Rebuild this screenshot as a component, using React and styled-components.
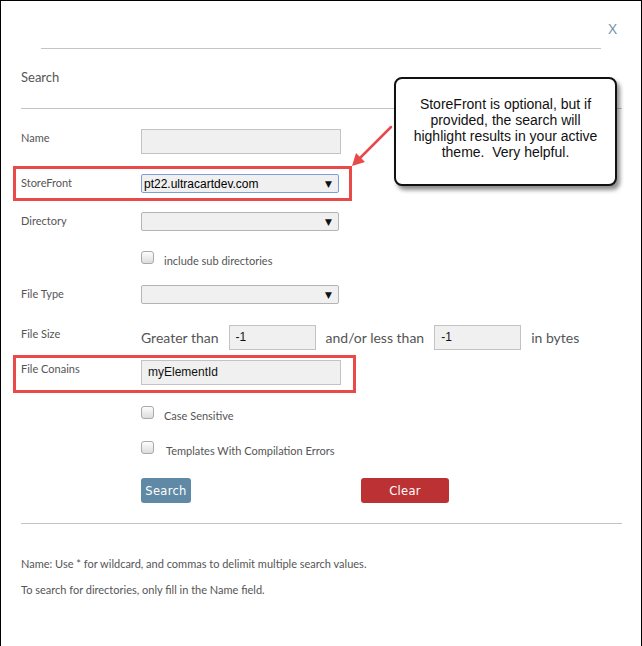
import React from "react";
import styled, { createGlobalStyle } from "styled-components";

const GlobalStyle = createGlobalStyle`
  html, body {
    margin: 0;
    padding: 0;
    background: #fff;
  }
  * {
    box-sizing: border-box;
  }
`;

const Frame = styled.div`
  position: relative;
  width: 642px;
  height: 646px;
  border: 1px solid #000;
  border-bottom: none;
  font-family: Lato, "Open Sans", sans-serif;
  color: #555;
  overflow: hidden;
`;

const Header = styled.div`
  height: 47px;
  padding: 18px 24px 0 0;
  display: flex;
  justify-content: flex-end;
`;

const Close = styled.span`
  font-family: "Open Sans", sans-serif;
  font-size: 15px;
  line-height: 18px;
  color: #6e8ea8;
`;

const Rule = styled.div`
  height: 1px;
  background: #c4c4c4;
  margin: ${props => props.inset ? "0 40px" : "0 19px 0 20px"};
  margin-top: ${props => props.top || 0}px;
`;

const Title = styled.div`
  font-size: 13px;
  line-height: 16px;
  padding-left: 20px;
  margin: 20px 0 23px;
`;

const Form = styled.div`
  padding-left: 20px;
  display: flex;
  flex-direction: column;
  align-items: flex-start;
`;

const Row = styled.div`
  display: flex;
  align-items: flex-start;
  margin-top: ${props => props.top}px;
`;

const Highlight = styled.div`
  display: flex;
  align-items: flex-start;
  margin-top: ${props => props.top}px;
  margin-left: -8px;
  border: 3px solid #e84a4a;
  padding: ${props => props.pad};
`;

const Label = styled.div`
  width: 120px;
  font-size: 11px;
  line-height: 17px;
  color: #555;
`;

const TextInput = styled.div`
  width: ${props => props.w || 200}px;
  height: 25px;
  background: #f0f0f0;
  border: 1px solid #c3c3c3;
  padding-left: 6px;
  font-family: "Liberation Sans", Arial, sans-serif;
  font-size: 12px;
  line-height: 23px;
  color: #111;
`;

const Select = styled.div`
  width: 198px;
  height: 19px;
  background: #f0f0f0;
  border: 1px solid ${props => props.focused ? "#7d9fd8" : "#b4b4b4"};
  border-radius: 2px;
  display: flex;
  align-items: center;
  justify-content: space-between;
  padding: 0 6px 0 2px;
  font-family: "Liberation Sans", Arial, sans-serif;
  font-size: 12px;
  color: #000;
`;

const Caret = styled.span`
  font-family: "DejaVu Sans", sans-serif;
  font-size: 9px;
  color: #111;
`;

const Check = styled.span`
  width: 13px;
  height: 13px;
  border: 1px solid #a9a9a9;
  border-radius: 3px;
  background: linear-gradient(#fdfdfd, #dcdcdc);
  flex-shrink: 0;
`;

const CheckRow = styled.div`
  display: flex;
  align-items: flex-start;
  height: 13px;
  margin-top: ${props => props.top}px;
  margin-left: 120px;
  gap: ${props => props.gap || 10}px;
  font-size: 11px;
  line-height: 13px;
  color: #555;
  white-space: nowrap;
`;

const CheckText = styled.span`
  padding-top: 3px;
`;

const Inline = styled.div`
  display: flex;
  align-items: center;
  gap: 10px;
  font-size: 14px;
  color: #555;
`;

const Buttons = styled.div`
  display: flex;
  margin-top: 24px;
  margin-left: 120px;
  gap: 170px;
`;

const Button = styled.div`
  width: ${props => props.w}px;
  height: 25px;
  border-radius: 3px;
  background: ${props => props.danger ? "#bc3234" : "#5f89a4"};
  color: #fff;
  font-family: "DejaVu Sans", Verdana, sans-serif;
  font-size: 11.5px;
  letter-spacing: 0.3px;
  display: flex;
  align-items: center;
  justify-content: center;
`;

const Note = styled.p`
  margin: ${props => props.top}px 0 0 20px;
  font-size: 11px;
  line-height: 16px;
  color: #555;
`;

const Callout = styled.div`
  position: absolute;
  left: 393px;
  top: 76px;
  width: 223px;
  height: 109px;
  border: 2px solid #111;
  border-radius: 8px;
  background: #fff;
  box-shadow: 3px 4px 4px rgba(0, 0, 0, 0.45);
  display: flex;
  align-items: center;
  justify-content: center;
  padding: 0 6px 8px;
  text-align: center;
  font-family: "Liberation Sans", Arial, sans-serif;
  font-size: 14px;
  line-height: 16px;
  color: #111;
  white-space: pre-wrap;
`;

const Pointer = styled.svg`
  position: absolute;
  left: 340px;
  top: 110px;
`;

const App = () => (
  <>
    <GlobalStyle />
    <Frame>
      <Header><Close>X</Close></Header>
      <Rule inset />
      <Title>Search</Title>
      <Rule />

      <Form>
        <Row top={20}>
          <Label>Name</Label>
          <TextInput />
        </Row>

        <Highlight top={12} pad="5px 10px 5px 5px">
          <Label>StoreFront</Label>
          <Select focused>pt22.ultracartdev.com<Caret>▼</Caret></Select>
        </Highlight>

        <Row top={11}>
          <Label>Directory</Label>
          <Select><span /><Caret>▼</Caret></Select>
        </Row>

        <CheckRow top={20}><Check /><CheckText>include sub directories</CheckText></CheckRow>

        <Row top={21}>
          <Label>File Type</Label>
          <Select><span /><Caret>▼</Caret></Select>
        </Row>

        <Row top={21}>
          <Label>File Size</Label>
          <Inline>
            Greater than
            <TextInput w={87}>-1</TextInput>
            and/or less than
            <TextInput w={87}>-1</TextInput>
            in bytes
          </Inline>
        </Row>

        <Highlight top={5} pad="2px 12px 5px 5px">
          <Label>File Conains</Label>
          <TextInput>myElementId</TextInput>
        </Highlight>

        <CheckRow top={13}><Check /><CheckText>Case Sensitive</CheckText></CheckRow>
        <CheckRow top={22} gap={12}><Check /><CheckText>Templates With Compilation Errors</CheckText></CheckRow>

        <Buttons>
          <Button w={50}>Search</Button>
          <Button w={88} danger>Clear</Button>
        </Buttons>
      </Form>

      <Rule top={20} />
      <Note top={32}>Name: Use * for wildcard, and commas to delimit multiple search values.</Note>
      <Note top={10}>To search for directories, only fill in the Name field.</Note>

      <Pointer width="60" height="70" viewBox="0 0 60 70">
        <line x1="50" y1="16" x2="17" y2="49" stroke="#e84a4a" strokeWidth="2.5" strokeLinecap="round" />
        <polygon points="11,55 15,42 24,51" fill="#e84a4a" />
      </Pointer>
      <Callout>{"StoreFront is optional, but if\nprovided, the search will\nhighlight results in your active\ntheme.  Very helpful."}</Callout>
    </Frame>
  </>
);

export default App;
